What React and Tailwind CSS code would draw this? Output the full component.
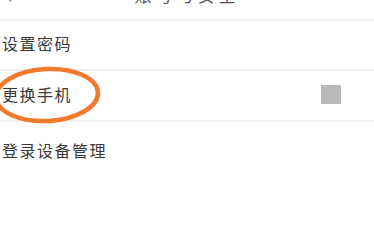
export default function App() {
  const font = { fontFamily: '"Noto Sans CJK SC", "Noto Sans", sans-serif' };
  return (
    <div className="relative w-[374px] h-[252px] overflow-hidden bg-white text-[#3a3a3a]" style={font}>
      <div className="relative h-[21px] overflow-hidden border-b-2 border-[#efefef]">
        <div className="flex items-start justify-center -mt-[14px]">
          <span className="text-[17px] leading-[17px] tracking-[4px] text-[#555]">账号与安全</span>
        </div>
        <span className="absolute left-[8px] -top-[11px] text-[15px] leading-[15px] text-[#555]">‹</span>
      </div>
      <div className="flex h-[50px] items-center pl-[2px] pb-[4px] border-b-2 border-[#efefef]">
        <span className="text-[16px] leading-[16px] tracking-[1.5px]">设置密码</span>
      </div>
      <div className="flex h-[51px] items-center justify-between pl-[2px] pr-[33px] pb-[3px] border-b-2 border-[#efefef]">
        <span className="text-[16px] leading-[16px] tracking-[1.5px]">更换手机</span>
        <div className="w-[20px] h-[19px] bg-[#b9b9b9] mt-[1px]" />
      </div>
      <div className="flex pt-[20px] pl-[2px]">
        <span className="text-[16px] leading-[16px] tracking-[1.5px]">登录设备管理</span>
      </div>
      <svg className="absolute left-[-10px] top-[64px]" width="112" height="62" viewBox="0 0 112 62">
        <ellipse cx="57" cy="31" rx="51" ry="26" fill="none" stroke="#f27a2c" strokeWidth="4.5" transform="rotate(-3 57 31)" />
      </svg>
    </div>
  );
}
